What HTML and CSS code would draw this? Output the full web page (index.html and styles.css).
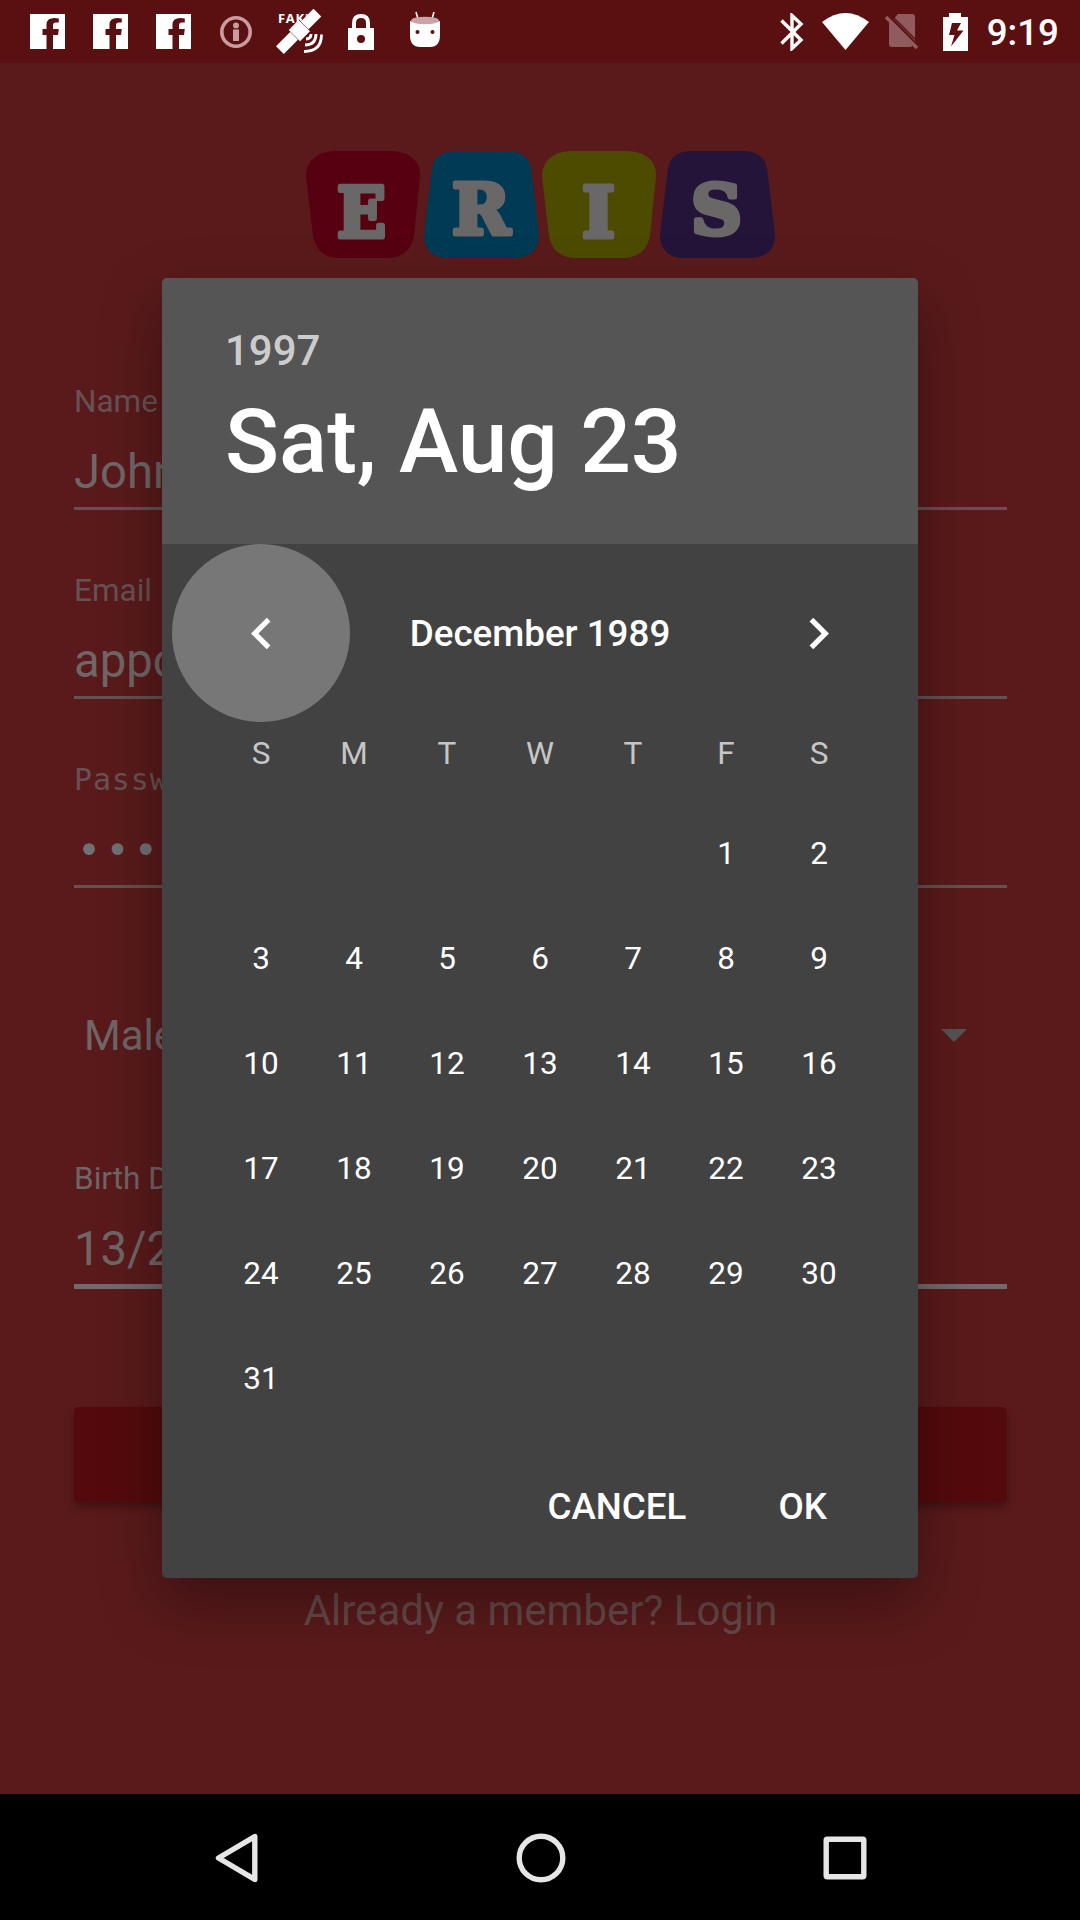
FILE: index.html
```html
<!DOCTYPE html>
<html lang="en">
<head>
<meta charset="utf-8">
<title>Eris – Sign up</title>
<link rel="stylesheet" href="styles.css">
</head>
<body>
<header class="status">
  <div class="notifications">
    <svg class="fb" viewBox="0 0 35 35"><path d="M0 0h35v35H23V21h5l.8-6H23v-4q0-2.500 2.800-2.500h3V4.500q-12-2-12.300 6V15h-4v6h4v14H0z"/></svg>
    <svg class="fb" viewBox="0 0 35 35"><path d="M0 0h35v35H23V21h5l.8-6H23v-4q0-2.500 2.800-2.500h3V4.500q-12-2-12.300 6V15h-4v6h4v14H0z"/></svg>
    <svg class="fb" viewBox="0 0 35 35"><path d="M0 0h35v35H23V21h5l.8-6H23v-4q0-2.500 2.800-2.500h3V4.500q-12-2-12.300 6V15h-4v6h4v14H0z"/></svg>
    <svg class="info" viewBox="0 0 32 32"><circle cx="16" cy="16" r="14.200" fill="none" stroke="currentColor" stroke-width="3.600"/><circle cx="16" cy="9.500" r="3"/><path d="M13 13.500h6V25h-6z"/></svg>
    <svg class="gps" viewBox="0 0 44 44"><text class="fake" x="1" y="11.500" textLength="34">FAKE</text><g transform="rotate(-45 22 20)"><path class="cut" d="M-5 14.500h54v11H-5z"/><path d="M-5 14.500h20v11H-5zM30 14.500h18v11H30zM15.500 12h14v16h-14z"/></g><path class="waves" d="M29 28q5 0 5-5M28 34q11 0 11-11M27 40.500q17.500 0 17.500-17"/></svg>
    <svg class="lock" viewBox="0 0 26 36"><path d="M6 15V9q0-7 7-7t7 7v6" fill="none" stroke="currentColor" stroke-width="4"/><path fill-rule="evenodd" d="M0 14h26v22H0zM13 21a4 4 0 1 0 0 8 4 4 0 0 0 0-8z"/></svg>
    <svg class="droid" viewBox="0 0 32 36"><path d="M7 1l2 7M25 1l-2 7" stroke="currentColor" stroke-width="1.600"/><path d="M1 10q15 5 30 0v14q0 12-10 12H11Q1 36 1 24z"/><ellipse class="lid" cx="16" cy="9.500" rx="14" ry="3.800"/><circle class="eye" cx="8.500" cy="21" r="2"/><circle class="eye" cx="23.500" cy="21" r="2"/></svg>
  </div>
  <div class="system">
    <svg class="bluetooth" viewBox="0 0 24 38"><path d="M1.500 7.500L21 27 12 35.500V2.500L21 11 1.500 30.500" fill="none" stroke="currentColor" stroke-width="3.400"/></svg>
    <svg class="wifi" viewBox="0 0 47 37"><path d="M0 9Q23.500-9 47 9L23.500 37z"/></svg>
    <svg class="sim" viewBox="0 0 34 37"><path d="M13 1h14q3 0 3 3v24L8.500 6zM4 8l24 24q-1 2-3 2H7q-3 0-3-3z"/><path d="M1 4l31 31" stroke="currentColor" stroke-width="3.500"/><path class="slash" d="M5 5l26 26"/></svg>
    <svg class="battery" viewBox="0 0 25 38"><path fill-rule="evenodd" d="M0 4h6V0h12v4h7v34H0zM9 10L6 22h5.500L8 33.500 20.500 17.500H14L18 10z"/></svg>
    <span class="clock">9:19</span>
  </div>
</header>

<main class="signup">
  <svg class="logo" viewBox="0 0 470 107">
    <path fill="#560012" d="M28 0h58q28 2 28 25l-6 60q-4 21-26 22H32Q11 106 7 85L0 25Q1 2 28 0z"/>
    <path fill="#003a54" d="M146 0h58q18 2 21 17l8 67q0 21-23 23h-70q-22-2-22-23l8-67q3-15 20-17z"/>
    <path fill="#4d4b00" d="M264 0h58q28 2 28 25l-6 60q-4 21-26 22h-50q-21-1-25-22l-7-60q1-23 28-25z"/>
    <path fill="#24143a" d="M382 0h58q18 2 21 17l8 67q0 21-23 23h-70q-22-2-22-23l8-67q3-15 20-17z"/>
    <g class="letters">
      <text x="31" y="85.500" textLength="49" lengthAdjust="spacingAndGlyphs">E</text>
      <text x="146" y="83" textLength="58" lengthAdjust="spacingAndGlyphs">R</text>
      <text x="276" y="85.500" textLength="33" lengthAdjust="spacingAndGlyphs">I</text>
      <text x="385" y="83" textLength="51" lengthAdjust="spacingAndGlyphs">S</text>
    </g>
  </svg>
  <form class="form">
    <div class="field"><label>Name</label><div class="value">John</div></div>
    <div class="field"><label>Email</label><div class="value">appc</div></div>
    <div class="field password"><label>Passw</label><div class="value">•••</div></div>
    <div class="select"><span>Male</span><i class="caret"></i></div>
    <div class="field focused"><label>Birth D</label><div class="value">13/2</div></div>
    <div class="submit"></div>
  </form>
  <p class="login">Already a member? Login</p>
</main>

<nav class="navbar">
  <svg viewBox="0 0 50 50"><path d="M43.800 3.500v43L7.500 25z"/></svg>
  <svg viewBox="0 0 50 50"><circle cx="25" cy="25" r="21.800"/></svg>
  <svg viewBox="0 0 50 50"><rect x="6.200" y="6.200" width="37.600" height="37.600" rx="1"/></svg>
</nav>

<section class="dialog">
  <div class="head">
    <div class="year">1997</div>
    <div class="date">Sat, Aug 23</div>
  </div>
  <div class="month">
    <span class="arrow pressed"><svg viewBox="0 0 24 24"><path d="M15.410 7.410L14 6l-6 6 6 6 1.410-1.410L10.830 12z"/></svg></span>
    <span class="title">December 1989</span>
    <span class="arrow"><svg viewBox="0 0 24 24"><path d="M10 6L8.590 7.410 13.170 12l-4.580 4.590L10 18l6-6z"/></svg></span>
  </div>
  <div class="week"><span>S</span><span>M</span><span>T</span><span>W</span><span>T</span><span>F</span><span>S</span></div>
  <div class="days">
    <span class="first">1</span><span>2</span>
    <span>3</span><span>4</span><span>5</span><span>6</span><span>7</span><span>8</span><span>9</span>
    <span>10</span><span>11</span><span>12</span><span>13</span><span>14</span><span>15</span><span>16</span>
    <span>17</span><span>18</span><span>19</span><span>20</span><span>21</span><span>22</span><span>23</span>
    <span>24</span><span>25</span><span>26</span><span>27</span><span>28</span><span>29</span><span>30</span>
    <span>31</span>
  </div>
  <div class="actions"><span>CANCEL</span><span>OK</span></div>
</section>
</body>
</html>
```
FILE: styles.css
```css
* { box-sizing: border-box; }
body {
  position: relative;
  width: 1080px;
  height: 1920px;
  margin: 0;
  display: flex;
  flex-direction: column;
  overflow: hidden;
  background: #5a1a1b;
  font-family: Roboto, sans-serif;
}
svg { display: block; fill: currentColor; flex: none; }

/* status bar */
.status {
  height: 63px;
  flex: none;
  display: flex;
  justify-content: space-between;
  padding: 0 21px 0 30px;
  background: #5a0f11;
  color: #fff;
}
.notifications, .system { display: flex; align-items: center; }
.fb { width: 35px; height: 35px; margin-right: 28px; }
.info { width: 32px; height: 32px; margin-left: 1px; color: #c99da0; }
.gps { width: 44px; height: 44px; margin: 2px 0 0 25px; overflow: visible; }
.fake { font: 700 13px "Open Sans", sans-serif; }
.cut { fill: #5a0f11; }
.waves { fill: none; stroke: currentColor; stroke-width: 2.8; }
.lock { width: 26px; height: 36px; margin-left: 27px; }
.droid { width: 32px; height: 36px; margin: -6px 0 0 35px; }
.lid { fill: #c9a3a5; }
.eye { fill: #5a0f11; }
.bluetooth { width: 24px; height: 38px; }
.wifi { width: 47px; height: 37px; margin-left: 18px; }
.sim { width: 34px; height: 37px; margin-left: 16px; color: #905b5d; }
.slash { stroke: #5a0f11; stroke-width: 1.5; transform: translate(2px, -2px); }
.battery { width: 25px; height: 38px; margin-left: 24px; }
.clock { margin: 3px 0 0 19px; font-size: 36.75px; font-weight: 500; line-height: 40px; }

/* sign-up screen */
.signup {
  flex: 1;
  display: flex;
  flex-direction: column;
  padding: 88px 73px 0 74px;
  color: #6f6667;
}
.logo { width: 470px; height: 107px; align-self: center; }
.letters {
  fill: #6a6768;
  stroke: #6a6768;
  stroke-width: 5;
  stroke-linejoin: round;
  font: 700 70px "DejaVu Serif", serif;
}
.form { margin-top: 123px; }
.field { height: 129px; margin-bottom: 60px; border-bottom: 3px solid #625253; }
.field label {
  display: block;
  padding-top: 1px;
  margin-bottom: 20px;
  font-size: 31.5px;
  line-height: 40px;
  color: #665254;
}
.value { font-size: 47.25px; line-height: 60px; }
.password { margin-bottom: 0; }
.password label { font: 30px/40px "DejaVu Sans Mono", monospace; letter-spacing: .85px; }
.password .value {
  padding-left: 3px;
  font-family: "DejaVu Sans Mono", monospace;
  font-size: 40px;
  letter-spacing: 4.3px;
  color: #6f7172;
}
.select {
  display: flex;
  justify-content: space-between;
  align-items: center;
  height: 60px;
  margin: 117px 40px 93px 10px;
  font-size: 42px;
}
.caret {
  border: solid transparent;
  border-width: 13px 13px 0;
  border-top-color: #565354;
}
.focused { height: 131px; margin-bottom: 118px; border-bottom: 5px solid #706b6c; }
.focused label { color: #6f6667; }
.submit { height: 95px; border-radius: 5px; background: #540a0c; box-shadow: 0 5px 8px rgba(0, 0, 0, .3); }
.login { margin: 79px 0 0; font-size: 42px; line-height: 60px; text-align: center; color: #66494a; }

/* system navigation */
.navbar {
  height: 126px;
  flex: none;
  display: flex;
  justify-content: space-between;
  align-items: center;
  padding: 1px 210px 0 211px;
  background: #000;
  color: #e6e6e6;
}
.navbar svg {
  width: 50px;
  height: 50px;
  fill: none;
  stroke: currentColor;
  stroke-width: 5.4;
  stroke-linejoin: round;
}

/* date picker */
.dialog {
  position: absolute;
  left: 162px;
  top: 278px;
  width: 756px;
  height: 1300px;
  border-radius: 5px;
  overflow: hidden;
  background: #424242;
  color: #fff;
  box-shadow: 0 24px 60px rgba(0, 0, 0, .36);
}
.head { height: 266px; padding: 48px 63px 0; background: #555; font-weight: 500; }
.year { font-size: 42px; line-height: 50px; color: #ccc; }
.date { margin-top: 13px; font-size: 89.25px; line-height: 106px; }
.month {
  height: 178px;
  display: flex;
  justify-content: space-between;
  align-items: center;
  padding: 0 10px;
}
.title { font-size: 36.75px; font-weight: 500; }
.arrow {
  width: 178px;
  height: 178px;
  display: flex;
  justify-content: center;
  align-items: center;
  border-radius: 50%;
}
.arrow svg { width: 63px; height: 63px; }
.pressed { background: #777; }
.week, .days {
  display: grid;
  grid-template-columns: repeat(7, 93px);
  justify-content: center;
  text-align: center;
  font-size: 31.5px;
}
.week { margin-top: 12px; line-height: 40px; color: #c6c6c6; }
.days { margin-top: 27px; grid-auto-rows: 105px; line-height: 105px; }
.first { grid-column: 6; }
.actions {
  display: flex;
  justify-content: flex-end;
  gap: 92px;
  padding: 54px 91px 0 0;
  font-size: 36.75px;
  font-weight: 500;
  line-height: 44px;
}
```
